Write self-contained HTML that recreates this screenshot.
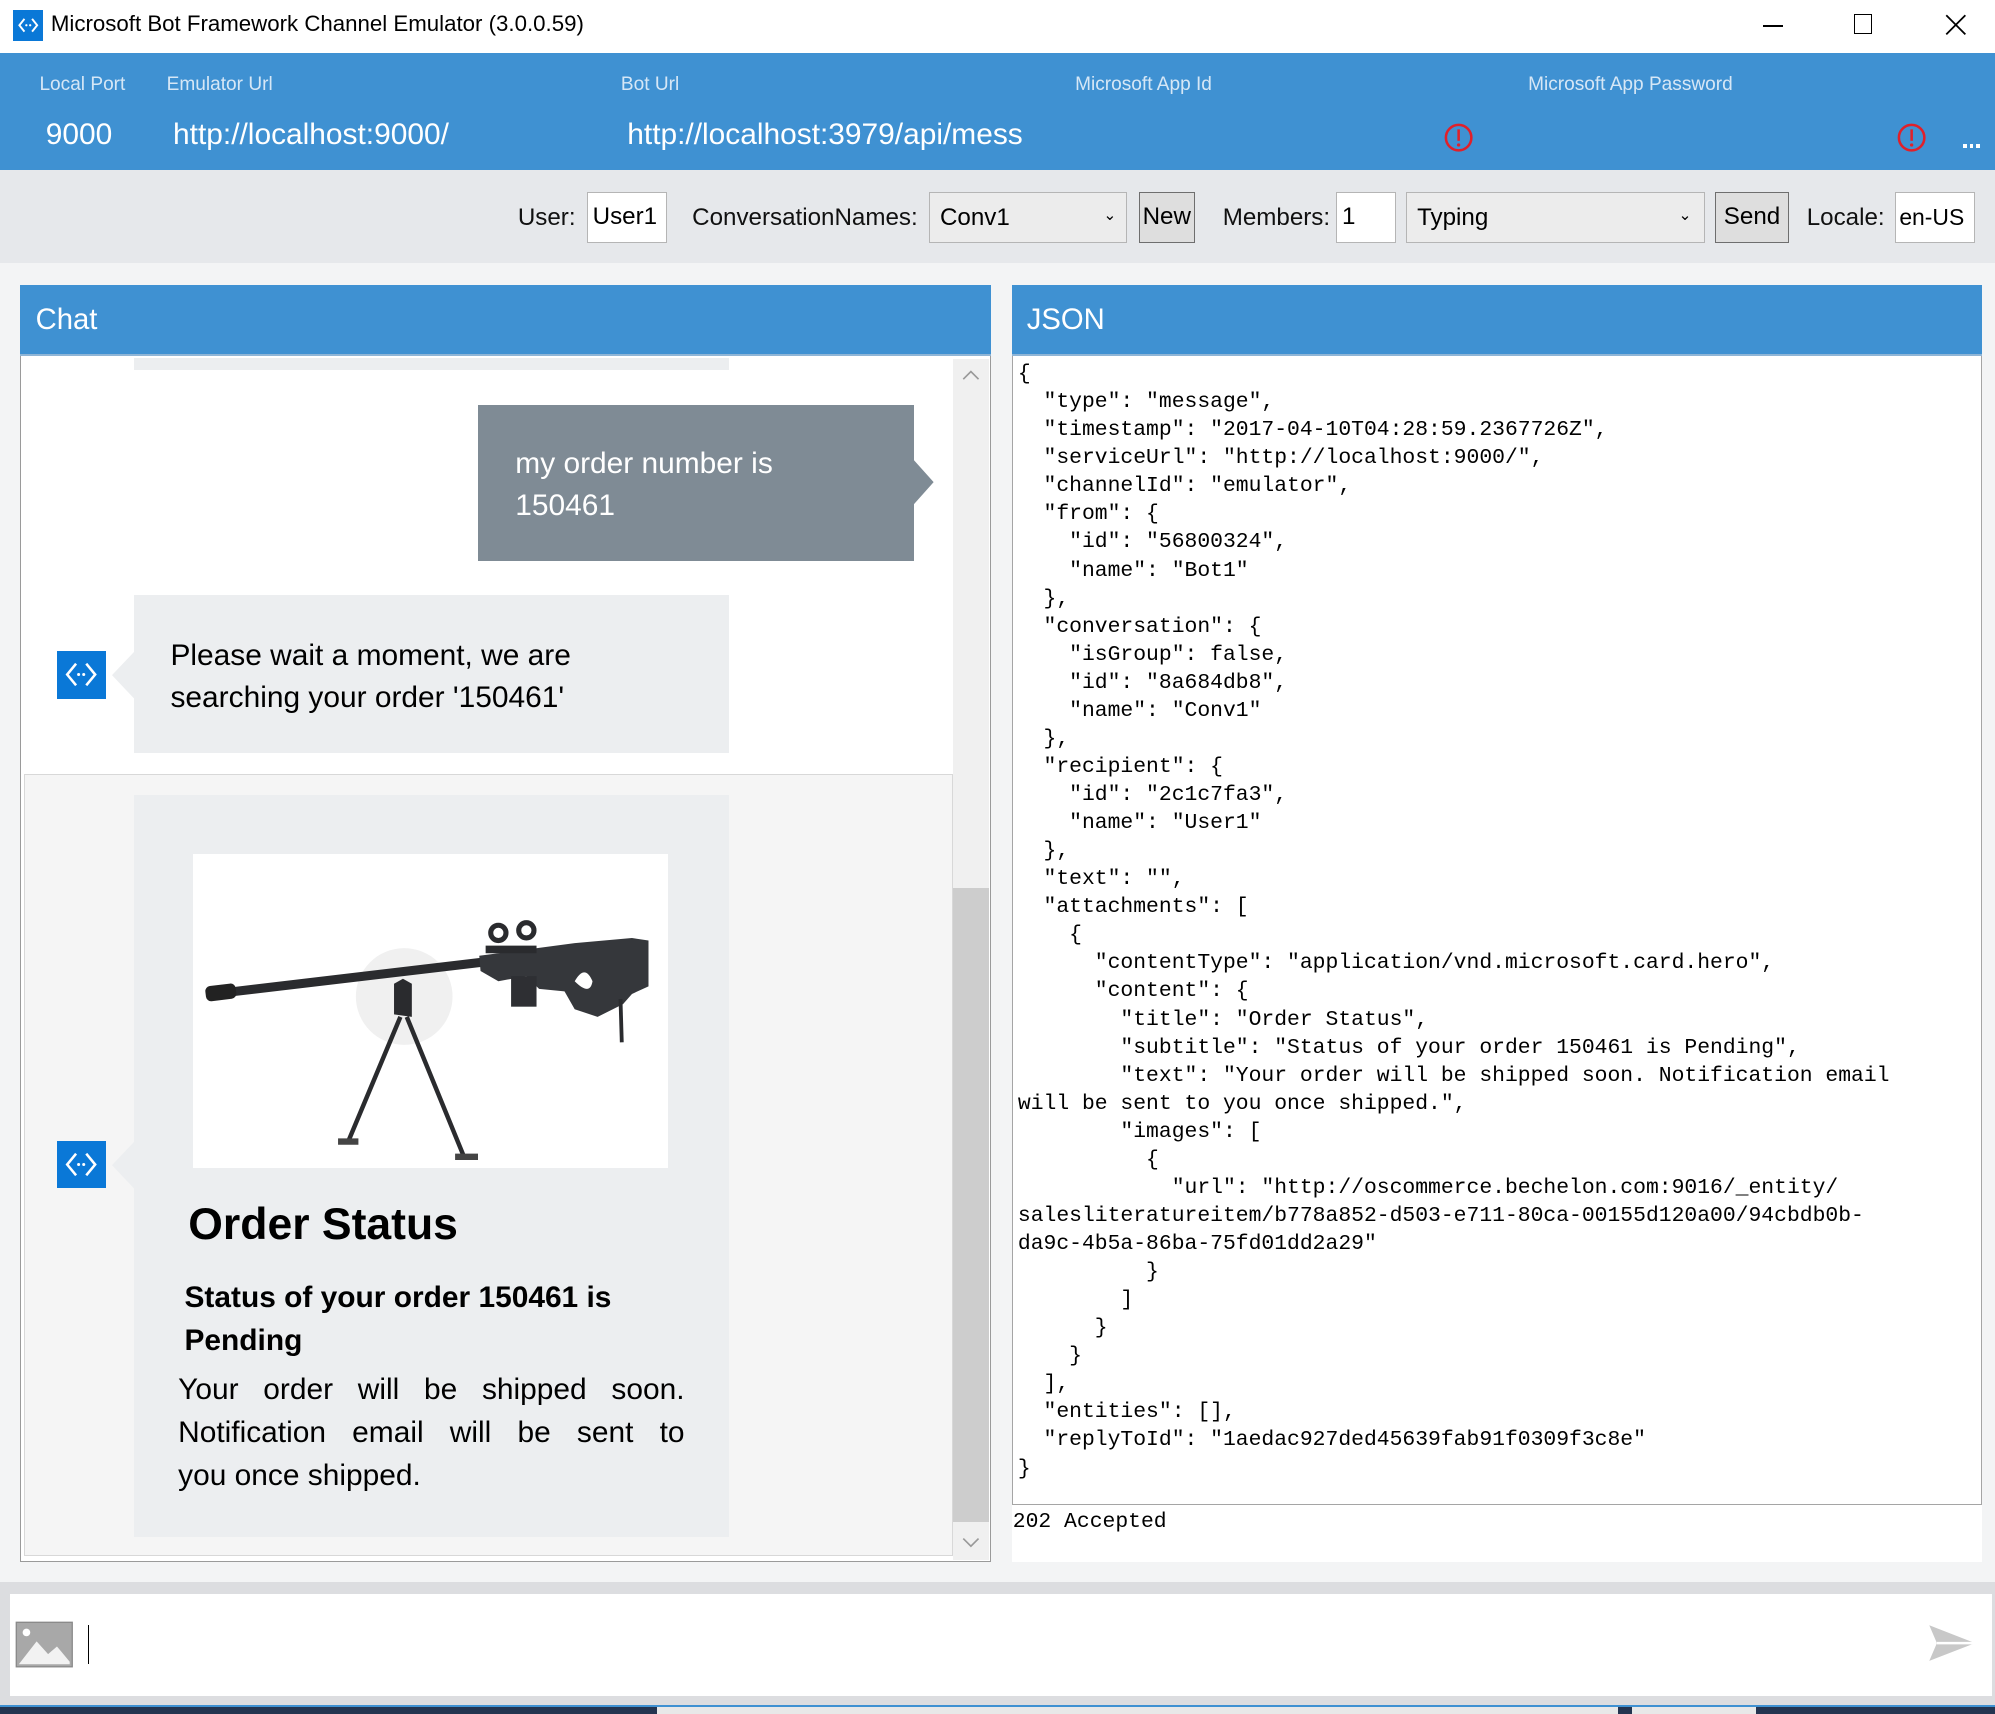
<!DOCTYPE html>
<html><head><meta charset="utf-8"><style>
html,body{margin:0;padding:0;background:#fff;overflow:hidden}
#w{position:relative;width:1568px;height:1347px;zoom:1.27235;font-family:"Liberation Sans",sans-serif;background:#f3f4f5;overflow:hidden}
.a{position:absolute}
.bi{background:#0a78d7}
.box{position:absolute;background:#fff;border:1px solid #b5b5b5;box-sizing:border-box;font-size:19px;color:#000;padding:0 4px;line-height:38px;white-space:nowrap;overflow:hidden}
.dd{position:absolute;background:#ececec;border:1px solid #b5b5b5;box-sizing:border-box;font-size:19px;padding:0 8px;line-height:40px}
.btn{position:absolute;background:#dedede;border:1px solid #6e6e6e;box-sizing:border-box;font-size:19px;text-align:center;line-height:38px}
.lbl{position:absolute;font-size:19px;color:#111}
.j{text-align:justify;text-align-last:justify}
pre{margin:0;font-family:"Liberation Mono",monospace;font-size:16.8px;line-height:22.05px;color:#000}
</style></head><body><div id="w">
<!-- title bar -->
<div class="a" style="left:0;top:0;width:1568px;height:42px;background:#fff"></div>
<div class="a bi" style="left:10px;top:8px;width:24px;height:24px"><svg width="24" height="24" viewBox="0 0 24 24"><path d="M9 7 L5 12 L9 17 M15 7 L19 12 L15 17" stroke="#fff" stroke-width="1.5" fill="none"/><circle cx="10.5" cy="12" r="0.9" fill="#fff"/><circle cx="13.5" cy="12" r="0.9" fill="#fff"/></svg></div>
<div class="a" style="left:40px;top:9px;font-size:17.5px;color:#000">Microsoft Bot Framework Channel Emulator (3.0.0.59)</div>
<div class="a" style="left:1386px;top:20px;width:15px;height:1.5px;background:#000"></div>
<div class="a" style="left:1457px;top:11px;width:13px;height:14px;border:1.5px solid #000"></div>
<svg class="a" style="left:1529px;top:11px" width="17" height="17"><path d="M1 1L16 16M16 1L1 16" stroke="#000" stroke-width="1.4"/></svg>
<!-- blue header -->
<div class="a" style="left:0;top:42px;width:1568px;height:92px;background:#3f91d2"></div>
<div class="a" style="left:31px;top:58px;font-size:15px;color:#d6e7f6">Local Port</div>
<div class="a" style="left:131px;top:58px;font-size:15px;color:#d6e7f6">Emulator Url</div>
<div class="a" style="left:488px;top:58px;font-size:15px;color:#d6e7f6">Bot Url</div>
<div class="a" style="left:845px;top:58px;font-size:15px;color:#d6e7f6">Microsoft App Id</div>
<div class="a" style="left:1201px;top:58px;font-size:15px;color:#d6e7f6">Microsoft App Password</div>
<div class="a" style="left:36px;top:93px;font-size:23.5px;color:#fff">9000</div>
<div class="a" style="left:136px;top:93px;font-size:23.5px;color:#fff">http://localhost:9000/</div>
<div class="a" style="left:493px;top:93px;font-size:23.5px;color:#fff">http://localhost:3979/api/mess</div>
<svg class="a" style="left:1135px;top:97px" width="23" height="23"><circle cx="11.5" cy="11.5" r="10" stroke="#e0202a" stroke-width="2" fill="none"/><path d="M11.5 5V14" stroke="#e0202a" stroke-width="2"/><circle cx="11.5" cy="17.3" r="1.3" fill="#e0202a"/></svg>
<svg class="a" style="left:1491px;top:97px" width="23" height="23"><circle cx="11.5" cy="11.5" r="10" stroke="#e0202a" stroke-width="2" fill="none"/><path d="M11.5 5V14" stroke="#e0202a" stroke-width="2"/><circle cx="11.5" cy="17.3" r="1.3" fill="#e0202a"/></svg>
<div class="a" style="left:1543px;top:113px;width:3px;height:3px;background:#fff"></div>
<div class="a" style="left:1548px;top:113px;width:3px;height:3px;background:#fff"></div>
<div class="a" style="left:1553px;top:113px;width:3px;height:3px;background:#fff"></div>
<!-- toolbar -->
<div class="a" style="left:0;top:134px;width:1568px;height:73px;background:#e6e8eb"></div>
<div class="lbl" style="left:407px;top:160px">User:</div>
<div class="box" style="left:461px;top:151px;width:63px;height:40px">User1</div>
<div class="lbl" style="left:544px;top:160px">ConversationNames:</div>
<div class="dd" style="left:730px;top:151px;width:156px;height:40px">Conv1<span style="position:absolute;right:8px;top:-2px;font-size:12px">&#8964;</span></div>
<div class="btn" style="left:895px;top:151px;width:44px;height:40px">New</div>
<div class="lbl" style="left:961px;top:160px">Members:</div>
<div class="box" style="left:1050px;top:151px;width:47px;height:40px">1</div>
<div class="dd" style="left:1105px;top:151px;width:235px;height:40px">Typing<span style="position:absolute;right:10px;top:-2px;font-size:12px">&#8964;</span></div>
<div class="btn" style="left:1348px;top:151px;width:58px;height:40px">Send</div>
<div class="lbl" style="left:1420px;top:160px">Locale:</div>
<div class="box" style="left:1489px;top:151px;width:63px;height:40px;padding:0 3px;font-size:18px">en-US</div>
<!-- chat panel -->
<div class="a" style="left:16px;top:224px;width:763px;height:1004px;border:1px solid #9a9a9a;box-sizing:border-box;background:#fff"></div>
<div class="a" style="left:16px;top:224px;width:763px;height:56px;background:#3f91d2;border-bottom:2px solid #8fb5d6;box-sizing:border-box"></div>
<div class="a" style="left:28px;top:239px;font-size:23px;color:#fff">Chat</div>
<div class="a" style="left:105px;top:281px;width:468px;height:10px;background:#eceef0"></div>
<div class="a" style="left:376px;top:318px;width:342px;height:123px;background:#7f8b95"></div>
<svg class="a" style="left:717px;top:360px" width="18" height="40"><path d="M0 0L17 19L0 38Z" fill="#7f8b95"/></svg>
<div class="a" style="left:405px;top:348px;font-size:23.5px;line-height:33px;color:#fff">my order number is<br>150461</div>
<div class="a" style="left:105px;top:468px;width:468px;height:124px;background:#eceef0"></div>
<svg class="a" style="left:88px;top:512px" width="18" height="38"><path d="M18 0L0 19L18 38Z" fill="#eceef0"/></svg>
<div class="a" style="left:134px;top:499px;font-size:23.5px;line-height:33px;color:#000">Please wait a moment, we are<br>searching your order '150461'</div>
<div class="a bi" style="left:45px;top:512px;width:38px;height:37px"><svg width="38" height="37" viewBox="0 0 38 37"><path d="M15 10L8 18.5L15 27M23 10L30 18.5L23 27" stroke="#fff" stroke-width="2" fill="none"/><circle cx="17" cy="18.5" r="1.2" fill="#fff"/><circle cx="21" cy="18.5" r="1.2" fill="#fff"/></svg></div>
<!-- selected card area -->
<div class="a" style="left:19px;top:608px;width:730px;height:615px;background:#f5f5f5;border:1px solid #d8d8d8;box-sizing:border-box"></div>
<div class="a" style="left:105px;top:625px;width:468px;height:583px;background:#eceef0"></div>
<svg class="a" style="left:88px;top:897px" width="18" height="38"><path d="M18 0L0 19L18 38Z" fill="#eceef0"/></svg>
<div class="a bi" style="left:45px;top:897px;width:38px;height:37px"><svg width="38" height="37" viewBox="0 0 38 37"><path d="M15 10L8 18.5L15 27M23 10L30 18.5L23 27" stroke="#fff" stroke-width="2" fill="none"/><circle cx="17" cy="18.5" r="1.2" fill="#fff"/><circle cx="21" cy="18.5" r="1.2" fill="#fff"/></svg></div>
<div class="a" style="left:152px;top:671px;width:373px;height:247px;background:#fff">
<svg width="373" height="247" viewBox="0 0 373 247">
<circle cx="166" cy="112" r="38" fill="#f0f0f0"/>
<path d="M20 106 L240 80 L241 87 L21 113Z" fill="#2a2b2e"/>
<rect x="10" y="103" width="24" height="12" rx="4" fill="#222" transform="rotate(-7 20 110)"/>
<path d="M225 80 L300 70 L345 66 L358 68 L358 104 L345 110 L338 118 L318 128 L300 122 L292 108 L272 106 L262 96 L240 100 L226 92Z" fill="#35373b"/>
<path d="M300 100 q8 -14 14 0 q-2 12 -14 0z" fill="#fff"/>
<rect x="250" y="96" width="20" height="24" fill="#2e2f33"/>
<path d="M230 72 h40 v6 h-40z" fill="#2a2b2e"/>
<circle cx="240" cy="62" r="6" fill="none" stroke="#2a2b2e" stroke-width="4"/><circle cx="262" cy="60" r="6" fill="none" stroke="#2a2b2e" stroke-width="4"/>
<path d="M336 114 L337 148" stroke="#2a2b2e" stroke-width="3"/>
<path d="M165 98 L158 102 L158 126 L172 128 L172 102Z" fill="#2a2b2e"/>
<path d="M163 128 L122 226 M168 128 L213 238" stroke="#2a2b2e" stroke-width="3.5"/>
<path d="M114 226 h16 M206 238 h18" stroke="#444" stroke-width="5"/>
</svg></div>
<div class="a" style="left:148px;top:943px;font-size:35px;font-weight:bold;color:#000">Order Status</div>
<div class="a" style="left:145px;top:1003px;font-size:23.5px;font-weight:bold;line-height:34px;color:#000;width:400px">Status of your order 150461 is<br>Pending</div>
<div class="a" style="left:140px;top:1075px;width:398px;font-size:23.5px;line-height:34px;color:#000">
<div class="j">Your order will be shipped soon.</div>
<div class="j">Notification email will be sent to</div>
<div>you once shipped.</div></div>
<!-- scrollbar -->
<div class="a" style="left:749px;top:282px;width:28px;height:944px;background:#f0f0f0"></div>
<div class="a" style="left:749px;top:698px;width:28px;height:498px;background:#cdcdcd"></div>
<svg class="a" style="left:756px;top:290px" width="14" height="10"><path d="M1 8L7 2L13 8" stroke="#999" stroke-width="1.3" fill="none"/></svg>
<svg class="a" style="left:756px;top:1207px" width="14" height="10"><path d="M1 2L7 8L13 2" stroke="#999" stroke-width="1.3" fill="none"/></svg>
<!-- json panel -->
<div class="a" style="left:795px;top:224px;width:763px;height:1004px;background:#fff"></div>
<div class="a" style="left:795px;top:280px;width:763px;height:903px;border:1px solid #a5a5a5;border-top:0;box-sizing:border-box"></div>
<div class="a" style="left:795px;top:224px;width:763px;height:56px;background:#3f91d2;border-bottom:2px solid #8fb5d6;box-sizing:border-box"></div>
<div class="a" style="left:807px;top:239px;font-size:23px;color:#fff">JSON</div>
<pre class="a" style="left:800px;top:283px">{
  "type": "message",
  "timestamp": "2017-04-10T04:28:59.2367726Z",
  "serviceUrl": "http://localhost:9000/",
  "channelId": "emulator",
  "from": {
    "id": "56800324",
    "name": "Bot1"
  },
  "conversation": {
    "isGroup": false,
    "id": "8a684db8",
    "name": "Conv1"
  },
  "recipient": {
    "id": "2c1c7fa3",
    "name": "User1"
  },
  "text": "",
  "attachments": [
    {
      "contentType": "application/vnd.microsoft.card.hero",
      "content": {
        "title": "Order Status",
        "subtitle": "Status of your order 150461 is Pending",
        "text": "Your order will be shipped soon. Notification email
will be sent to you once shipped.",
        "images": [
          {
            "url": "http://oscommerce.bechelon.com:9016/_entity/
salesliteratureitem/b778a852-d503-e711-80ca-00155d120a00/94cbdb0b-
da9c-4b5a-86ba-75fd01dd2a29"
          }
        ]
      }
    }
  ],
  "entities": [],
  "replyToId": "1aedac927ded45639fab91f0309f3c8e"
}</pre>
<pre class="a" style="left:796px;top:1185px">202 Accepted</pre>
<!-- bottom input -->
<div class="a" style="left:0;top:1243px;width:1568px;height:100px;background:#dcdde0"></div>
<div class="a" style="left:8px;top:1253px;width:1558px;height:80px;background:#fff"></div>
<svg class="a" style="left:12px;top:1274px" width="46" height="37"><rect x="1" y="1" width="44" height="35" fill="#a8a8a8" stroke="#888"/><circle cx="9" cy="9" r="3" fill="#fff"/><path d="M3 34 L17 16 L26 26 L33 20 L43 32 L43 34Z" fill="#fff" opacity=".85"/></svg>
<div class="a" style="left:69px;top:1277px;width:1px;height:31px;background:#000"></div>
<svg class="a" style="left:1515px;top:1276px" width="38" height="30"><path d="M1 1 L37 15 L1 29 L7 15Z" fill="#c8c8c8"/><path d="M7 15H37" stroke="#fff" stroke-width="2"/></svg>
<div class="a" style="left:0;top:1340px;width:1568px;height:7px;background:#243450;border-top:2px solid #3f91d2;box-sizing:border-box"></div>
<div class="a" style="left:516px;top:1342px;width:756px;height:5px;background:#e8e8e8"></div>
<div class="a" style="left:1283px;top:1342px;width:97px;height:5px;background:#e8e8e8"></div>
</div></body></html>
